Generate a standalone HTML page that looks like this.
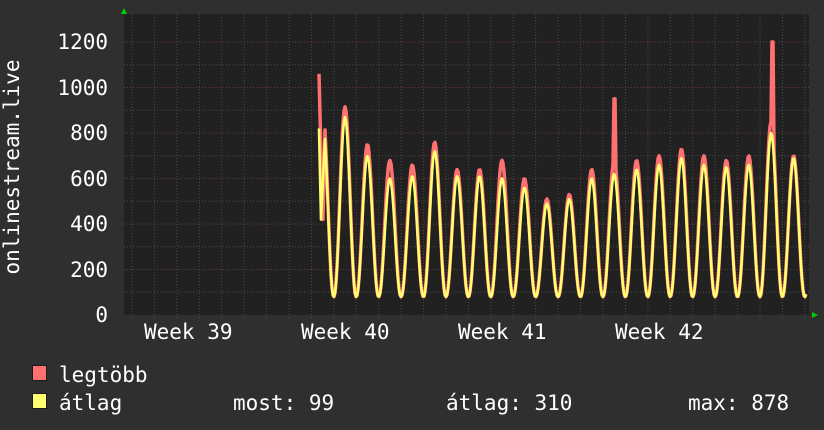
<!DOCTYPE html>
<html><head><meta charset="utf-8"><style>
html,body{margin:0;padding:0;background:#2f2f2f;}
svg{display:block}
text{font-family:"DejaVu Sans Mono","Liberation Mono",monospace;fill:#fff;}
</style></head><body>
<svg id="s" width="824" height="430" xmlns="http://www.w3.org/2000/svg">
<rect width="824" height="430" fill="#2f2f2f"/>
<rect x="124" y="14" width="685" height="301" fill="#212121"/>
<g id="grid"></g>
<path id="red" fill="none" stroke="#ff7070" stroke-width="3.5" stroke-linejoin="round"/>
<path id="yel" fill="none" stroke="#ffff70" stroke-width="2.6" stroke-linejoin="round"/>
<polygon points="121,14 127,14 124,8" fill="#00d000"/>
<polygon points="812,312 812,318 818,315" fill="#00d000"/>
<g font-size="21" text-anchor="end">
<text x="108" y="49">1200</text>
<text x="108" y="95">1000</text>
<text x="108" y="140">800</text>
<text x="108" y="186">600</text>
<text x="108" y="231">400</text>
<text x="108" y="277">200</text>
<text x="108" y="322">0</text>
</g>
<text transform="translate(19,167) rotate(-90)" font-size="21" text-anchor="middle">onlinestream.live</text>
<g font-size="21">
<text x="144" y="339">Week 39</text>
<text x="301" y="339">Week 40</text>
<text x="458" y="339">Week 41</text>
<text x="615" y="339">Week 42</text>
</g>
<rect x="32.5" y="365.5" width="14" height="15" fill="#ff7070" stroke="#1a1a1a" stroke-width="1"/>
<rect x="32.5" y="393.5" width="14" height="15" fill="#ffff70" stroke="#1a1a1a" stroke-width="1"/>
<g font-size="21">
<text x="59" y="382">legtöbb</text>
<text x="59" y="410">átlag</text>
<text x="233" y="410">most: 99</text>
<text x="446" y="410">átlag: 310</text>
<text x="688" y="410">max: 878</text>
</g>
</svg>
<script>
var g=document.getElementById('grid'),h='';
function Y(v){return 315-v*0.2275;}
for(var v=100;v<=1200;v+=100){var y=Y(v).toFixed(1);h+='<line x1="124" x2="809" y1="'+y+'" y2="'+y+'" stroke="'+(v%200==0?'#6a3a3a':'#4a4a4a')+'" stroke-dasharray="1,2"/>';}
for(var x=132;x<809;x+=22.43){var X=x.toFixed(1);var maj=[267,424,581,738].some(function(m){return Math.abs(m-x)<3});h+='<line y1="14" y2="318" x1="'+X+'" x2="'+X+'" stroke="'+(maj?'#6a3a3a':'#4a4a4a')+'" stroke-dasharray="1,2"/>';}
g.innerHTML=h;
var peaks=[[870,915],[700,750],[600,680],[610,660],[720,760],[610,640],[610,640],[600,680],[560,600],[490,510],[510,530],[600,640],[620,680],[640,680],[660,700],[690,730],[660,700],[650,680],[660,700],[800,850],[690,700]];
function val(x,k){var t=(x-345)/22.43;var i=Math.round(t);var f=t-i;var p=peaks[Math.max(0,Math.min(peaks.length-1,i))];var s=Math.pow((1+Math.cos(2*Math.PI*f))/2,1.1);var sh=(f>0.1&&f<0.28)?0.35:0;return 80+(p[k]-80)*Math.max(s,sh*(1-Math.abs(f-0.19)*3));}
var ry='M319,'+Y(1060)+' L321,'+Y(700)+' L323,'+Y(420);
var yy='M319,'+Y(820)+' L321,'+Y(420)+' L323,'+Y(600);
for(var x=325;x<=806;x++){var r=val(x,1),a=val(x,0);if(x==772||x==773){r=1200;}if(x==614||x==615){r=950;}ry+=' L'+x+','+Y(Math.max(r,a)).toFixed(1);yy+=' L'+x+','+Y(a).toFixed(1);}
document.getElementById('red').setAttribute('d',ry);
document.getElementById('yel').setAttribute('d',yy);
</script>
</body></html>
